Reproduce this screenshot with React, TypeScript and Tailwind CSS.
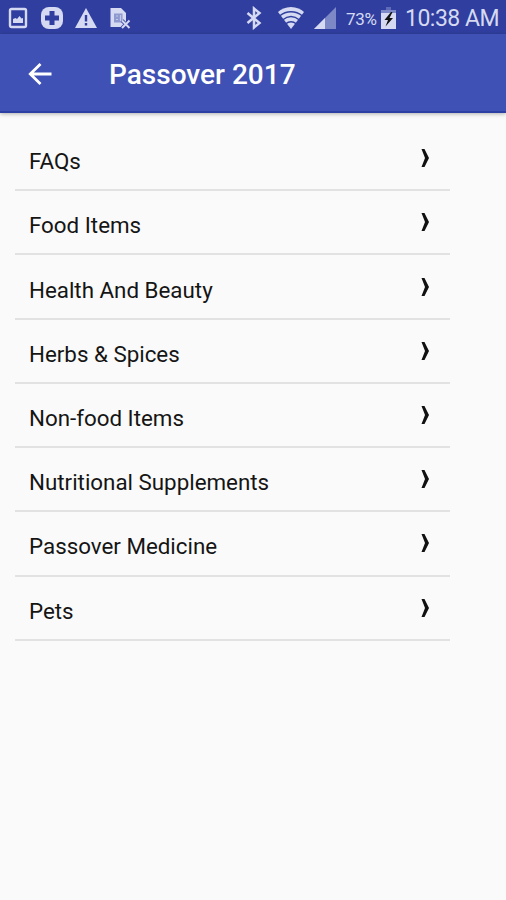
const categories = [
  "FAQs",
  "Food Items",
  "Health And Beauty",
  "Herbs & Spices",
  "Non-food Items",
  "Nutritional Supplements",
  "Passover Medicine",
  "Pets",
];

function StatusBar() {
  return (
    <div className="flex h-[34px] items-center justify-between bg-[#303f9f] pt-0.5 pr-[7px] pl-2 text-[#d5d9f1]">
      <div className="flex items-center">
        {/* Screenshot saved */}
        <svg width="20" height="22" viewBox="0 0 20 22" fill="none">
          <rect x="2" y="2" width="16" height="18" rx="1.5" stroke="currentColor" strokeWidth="2.4" />
          <path d="M5 16v-4l2.5-1 1.500 1 2.500-3 2 2.500 1.500-.5V16z" fill="currentColor" />
        </svg>
        <svg className="ml-[13px]" width="22" height="22" viewBox="0 0 22 22">
          <rect width="22" height="22" rx="8" fill="currentColor" />
          <path d="M8.500 4h5v4.500H18v5h-4.500V18h-5v-4.500H4v-5h4.500z" fill="#303f9f" />
        </svg>
        <svg className="ml-[11px]" width="24" height="22" viewBox="0 0 24 22">
          <path d="M12 1 23 21H1z" fill="currentColor" />
          <path d="M10.800 8h2.400v6.500h-2.400zM10.800 16h2.400v2.400h-2.400z" fill="#303f9f" />
        </svg>
        <svg className="ml-[11px]" width="22" height="22" viewBox="0 0 22 22" fill="none">
          <path d="M1.500 1H12l5 5v14H1.500z" fill="currentColor" />
          <path d="M5 6.500h8.500v9H5z" fill="#8f98cf" />
          <path d="M7 9h2M7 12.500h2M11.500 8v6" stroke="#c3c9e8" strokeWidth="1.200" />
          <path d="m13 13.500 7.500 7.500m0-7.500-7.500 7.500" stroke="#303f9f" strokeWidth="3.600" />
          <path d="m13 13.500 7.500 7.500m0-7.500-7.500 7.500" stroke="currentColor" strokeWidth="2" />
        </svg>
      </div>

      <div className="flex items-center">
        <svg width="16" height="24" viewBox="0 0 16 24" fill="none">
          <path d="m1.500 7 12 10L8 21.500v-19L13.500 7l-12 10" stroke="currentColor" strokeWidth="2.500" />
        </svg>
        <svg className="ml-[15px]" width="28" height="24" viewBox="0 0 28 24" fill="none">
          <path d="M14 1C8.500 1 4 3.200 1 6l13 17L27 6c-3-2.800-7.500-5-13-5z" fill="currentColor" />
          <path d="M2.500 10c7-5.600 16-5.600 23 0M5.500 14c5.500-4.400 11.500-4.400 17 0M8.500 18c3.500-2.800 7.500-2.800 11 0" stroke="#303f9f" strokeWidth="1.500" />
        </svg>
        <svg className="ml-[9px]" width="22" height="22" viewBox="0 0 22 22">
          <path d="M22 0v22H0z" fill="#7d88c7" />
          <path d="M11 11v11H0z" fill="currentColor" />
        </svg>
        <span className="ml-[10px] w-[31px] pt-px text-[17px] leading-6 tracking-[-0.3px] whitespace-nowrap">73%</span>
        <svg className="ml-[4px]" width="15" height="23" viewBox="0 0 15 23">
          <path d="M5 0h5v3H5z" fill="#5f6bb7" />
          <path d="M0 3h15v4H0z" fill="#7d88c7" />
          <path d="M0 6h15v16H0z" fill="currentColor" />
          <path d="M10 5 3.500 13H7l-2.500 6.500L12 11H8.500L11.500 5z" fill="#111" />
        </svg>
        <span className="ml-[9px] w-[94px] pt-[2px] text-[23px] leading-6 tracking-[-0.5px] whitespace-nowrap">10:38 AM</span>
      </div>
    </div>
  );
}

export default function App() {
  return (
    <div className="h-[900px] w-[506px] overflow-hidden bg-[#fafafa] font-[Roboto,sans-serif]">
      <StatusBar />
      <header className="flex h-[79px] items-center border-b-2 border-[#2c40a4] bg-[#3f51b5] pt-[3px] pl-7 text-white shadow-[0_1px_4px_rgba(0,0,0,0.3)]">
        <button aria-label="Back">
          <svg width="24" height="24" viewBox="0 0 24 24" fill="none" stroke="currentColor" strokeWidth="2.800">
            <path d="M23.500 12H2.500M12.500 2 2.300 12l10.200 10" />
          </svg>
        </button>
        <h1 className="ml-[57px] pt-[2px] text-[28px] leading-8 font-medium">Passover 2017</h1>
      </header>

      <ul className="mt-[14px] ml-[15px] w-[435px]">
        {categories.map((name) => (
          <li key={name} className="flex h-[64.220px] items-center justify-between border-b-2 border-[#e2e2e2] pr-[21px] pl-[14px] text-[#151515]">
            <span className="pt-[6px] text-[22.350px] leading-7">{name}</span>
            <svg width="8" height="18" viewBox="0 0 8 18">
              <path d="M.5 0h3L8 9l-4.500 9h-3l3.500-9z" fill="#111" />
            </svg>
          </li>
        ))}
      </ul>
    </div>
  );
}
